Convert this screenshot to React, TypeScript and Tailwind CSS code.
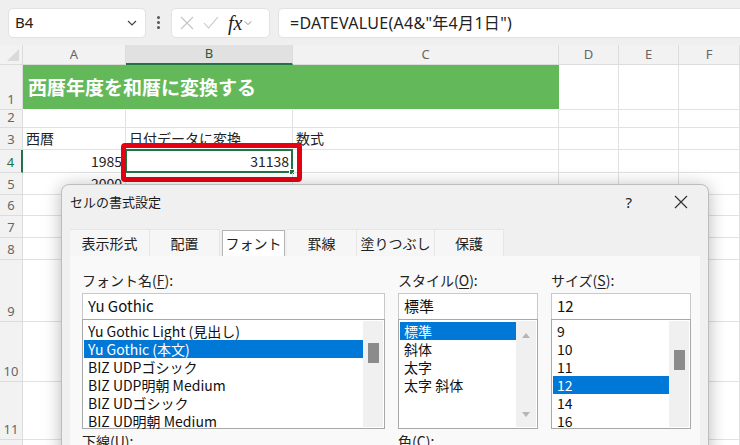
import React from 'react';

const FONT = '"Noto Sans", "Noto Sans CJK JP", sans-serif';
const JP = '"Noto Sans CJK JP", "Noto Sans", sans-serif';

const colWidths = [103, 167, 266, 60, 60, 61];
const colNames = ['A', 'B', 'C', 'D', 'E', 'F'];
const rowHeights = [45, 18, 22, 23, 22, 21, 22, 22, 62, 60, 58, 20];

function Chevron({ className }: { className?: string }) {
  return (
    <svg width="10" height="6" viewBox="0 0 10 6" className={className}>
      <path d="M1 1l4 4 4-4" fill="none" stroke="currentColor" strokeWidth="1.2" />
    </svg>
  );
}

function Toolbar() {
  return (
    <div className="flex h-[45px] items-center gap-[8px] bg-[#efefef] pl-[8px]">
      <div className="flex h-[30px] w-[138px] items-center justify-between rounded-[5px] border border-[#e2e2e2] bg-white pl-[6px] pr-[8px]">
        <span className="text-[15px] text-[#222]">B4</span>
        <Chevron className="text-[#444]" />
      </div>
      <div className="flex w-[9px] flex-col items-center gap-[2px]">
        <span className="h-[3px] w-[3px] rounded-full bg-[#555]" />
        <span className="h-[3px] w-[3px] rounded-full bg-[#555]" />
        <span className="h-[3px] w-[3px] rounded-full bg-[#555]" />
      </div>
      <div className="flex h-[30px] w-[99px] items-center gap-[9px] rounded-[5px] border border-[#e2e2e2] bg-white pl-[8px]">
        <svg width="14" height="14" viewBox="0 0 14 14">
          <path d="M1 1l12 12M13 1L1 13" stroke="#c4c4c4" strokeWidth="1.1" />
        </svg>
        <svg width="16" height="13" viewBox="0 0 16 13">
          <path d="M1 7l4.5 5L15 1" fill="none" stroke="#c4c4c4" strokeWidth="1.1" />
        </svg>
        <span className="flex items-center gap-[2px]">
          <span className="text-[20px] italic text-[#222]" style={{ fontFamily: '"Liberation Serif", serif' }}>fx</span>
          <Chevron className="w-[8px] text-[#888]" />
        </span>
      </div>
      <div className="flex h-[30px] flex-1 items-center rounded-l-[5px] border border-r-0 border-[#e2e2e2] bg-white pl-[11px] text-[16px] tracking-[0.3px] text-[#222]">
        =DATEVALUE(A4&amp;"年4月1日")
      </div>
    </div>
  );
}

function Cell({ w, h, children, className = '' }: { w: number; h: number; children?: React.ReactNode; className?: string }) {
  return (
    <div
      className={`relative flex shrink-0 border-b border-r border-[#e1e1e1] ${className}`}
      style={{ width: w, height: h }}
    >
      {children}
    </div>
  );
}

function Sheet() {
  return (
    <div className="flex flex-col bg-white" style={{ fontFamily: JP }}>
      <div className="flex h-[20px] bg-[#f2f2f2]">
        <div className="relative w-[23px] shrink-0 border-b border-r border-[#dcdcdc]">
          <svg width="12" height="12" viewBox="0 0 12 12" className="absolute bottom-[3px] right-[3px]">
            <path d="M12 0v12H0z" fill="#dadada" />
          </svg>
        </div>
        {colNames.map((c, i) => (
          <div
            key={c}
            className={`flex shrink-0 items-center justify-center border-r text-[13px] ${
              c === 'B'
                ? 'border-b-2 border-r-[#dcdcdc] border-b-[#217346] bg-[#e1e1e1] text-[#1e5e3b]'
                : 'border-b border-[#dcdcdc] text-[#666]'
            }`}
            style={{ width: colWidths[i], fontFamily: FONT }}
          >
            {c}
          </div>
        ))}
      </div>
      {rowHeights.map((h, r) => {
        const n = r + 1;
        return (
          <div key={n} className="flex">
            <div
              className={`flex w-[23px] shrink-0 items-end justify-center border-b bg-[#f2f2f2] pb-[1px] text-[13px] leading-[18px] ${
                n === 4
                  ? 'border-r-2 border-b-[#dcdcdc] border-r-[#217346] text-[#217346]'
                  : 'border-r border-[#dcdcdc] text-[#666]'
              }`}
              style={{ height: h, fontFamily: FONT }}
            >
              {n}
            </div>
            {n === 1 ? (
              <>
                <div className="flex h-[45px] w-[536px] shrink-0 items-center border-b border-white bg-[#63b95a] pl-[5px] pt-[1px]">
                  <span className="text-[19px] font-bold text-white">西暦年度を和暦に変換する</span>
                </div>
                {colWidths.slice(3).map((w, i) => (
                  <Cell key={i} w={w} h={h} />
                ))}
              </>
            ) : (
              colWidths.map((w, i) => {
                let content: React.ReactNode = null;
                let cls = 'items-end pb-[1px]';
                if (n === 3 && i === 0) content = '西暦';
                if (n === 3 && i === 1) content = '日付データに変換';
                if (n === 3 && i === 2) content = '数式';
                if (n === 4 && i === 0) { content = '1985'; cls += ' justify-end'; }
                if (n === 4 && i === 1) { content = '31138'; cls += ' justify-end'; }
                if (n === 5 && i === 0) { content = '2000'; cls += ' justify-end'; }
                return (
                  <Cell key={i} w={w} h={h} className={cls}>
                    {content && (
                      <span className="px-[3px] text-[14px] leading-[20px] text-[#222]">{content}</span>
                    )}
                    {n === 4 && i === 1 && (
                      <>
                        <span className="absolute -left-[1px] -top-[1px] bottom-[-1px] right-[-1px] border-2 border-[#217346]" />
                        <span className="absolute bottom-[-3px] right-[-3px] h-[6px] w-[6px] border border-white bg-[#217346]" />
                      </>
                    )}
                  </Cell>
                );
              })
            )}
          </div>
        );
      })}
    </div>
  );
}

function U({ children }: { children: React.ReactNode }) {
  return <span className="underline underline-offset-2">{children}</span>;
}

function ScrollBar({ thumbTop, arrows }: { thumbTop?: number; arrows?: boolean }) {
  return (
    <div className="relative w-[20px] shrink-0 bg-[#f0f0f0]">
      {thumbTop !== undefined && (
        <div className="absolute left-[5px] h-[20px] w-[11px] bg-[#8b8b8b]" style={{ top: thumbTop }} />
      )}
      {arrows && (
        <>
          <svg width="8" height="5" viewBox="0 0 8 5" className="absolute left-[6px] top-[12px]">
            <path d="M0 5L4 0l4 5z" fill="#b5b5b5" />
          </svg>
          <svg width="8" height="5" viewBox="0 0 8 5" className="absolute bottom-[10px] left-[6px]">
            <path d="M0 0l4 5 4-5z" fill="#b5b5b5" />
          </svg>
        </>
      )}
    </div>
  );
}

function ListColumn({
  width,
  label,
  value,
  items,
  selected,
  scroll,
}: {
  width: number;
  label: React.ReactNode;
  value: string;
  items: string[];
  selected: number;
  scroll: React.ReactNode;
}) {
  return (
    <div className="flex shrink-0 flex-col" style={{ width }}>
      <div className="h-[20px] text-[14px] leading-[20px] text-[#222]">{label}</div>
      <div className="mt-[3px] flex h-[26px] items-center border border-b-0 border-[#c9c9c9] bg-white pl-[5px] text-[15px] text-[#111]">
        {value}
      </div>
      <div className="flex h-[110px] border border-[#a8a8a8] bg-white p-[1px]">
        <div className="flex flex-1 flex-col pt-[1px]">
          {items.map((it, i) => (
            <div
              key={it}
              className={`h-[18px] whitespace-nowrap pl-[4px] text-[14px] leading-[18px] ${
                i === selected ? 'bg-[#0078d7] text-white' : 'text-[#111]'
              }`}
            >
              {it}
            </div>
          ))}
        </div>
        {scroll}
      </div>
    </div>
  );
}

function Dialog() {
  const tabs = ['表示形式', '配置', 'フォント', '罫線', '塗りつぶし', '保護'];
  const tabW = [80, 70, 67, 70, 78, 69];
  return (
    <div
      className="absolute left-[61px] top-[184px] h-[300px] w-[648px] rounded-[8px] border border-[#bdbdbd] bg-[#f0f0f0] shadow-[0_2px_18px_rgba(0,0,0,0.28)]"
      style={{ fontFamily: JP }}
    >
      <div className="flex h-[34px] items-center justify-between pl-[8px] pr-[20px]">
        <span className="text-[13px] text-[#1a1a1a]">セルの書式設定</span>
        <div className="flex items-center gap-[42px]">
          <span className="text-[15px] text-[#222]" style={{ fontFamily: FONT }}>?</span>
          <svg width="14" height="14" viewBox="0 0 14 14">
            <path d="M1 1l12 12M13 1L1 13" stroke="#333" strokeWidth="1.2" />
          </svg>
        </div>
      </div>
      <div className="mt-[10px] flex h-[27px] items-end pl-[8px]">
        {tabs.map((t, i) =>
          t === 'フォント' ? (
            <div
              key={t}
              className="mx-[2px] flex h-[26px] items-center justify-center border border-b-0 border-[#b4b4b4] bg-white text-[14px] text-[#222]"
              style={{ width: tabW[i] - 4 }}
            >
              {t}
            </div>
          ) : (
            <div
              key={t}
              className="flex h-[27px] items-center justify-center border-r border-t border-[#e6e6e6] bg-[#f6f6f6] text-[14px] text-[#222]"
              style={{ width: tabW[i] }}
            >
              {t}
            </div>
          )
        )}
      </div>
      <div className="mx-[8px] flex h-[220px] gap-[13px] bg-[#f9f9f9] pl-[12px] pt-[14px]">
        <div className="flex flex-col">
          <ListColumn
            width={303}
            label={<>フォント名(<U>F</U>):</>}
            value="Yu Gothic"
            items={['Yu Gothic Light (見出し)', 'Yu Gothic (本文)', 'BIZ UDPゴシック', 'BIZ UDP明朝 Medium', 'BIZ UDゴシック', 'BIZ UD明朝 Medium']}
            selected={1}
            scroll={<ScrollBar thumbTop={22} />}
          />
          <div className="mt-[2px] text-[14px] text-[#222]">下線(<U>U</U>):</div>
        </div>
        <div className="flex flex-col">
          <ListColumn
            width={140}
            label={<>スタイル(<U>O</U>):</>}
            value="標準"
            items={['標準', '斜体', '太字', '太字 斜体']}
            selected={0}
            scroll={<ScrollBar arrows />}
          />
          <div className="mt-[2px] text-[14px] text-[#222]">色(<U>C</U>):</div>
        </div>
        <ListColumn
          width={140}
          label={<>サイズ(<U>S</U>):</>}
          value="12"
          items={['9', '10', '11', '12', '14', '16']}
          selected={3}
          scroll={<ScrollBar thumbTop={29} />}
        />
      </div>
    </div>
  );
}

export default function App() {
  return (
    <div className="relative h-[445px] w-[740px] overflow-hidden bg-white" style={{ fontFamily: FONT }}>
      <Toolbar />
      <Sheet />
      <div className="absolute left-[121px] top-[143px] h-[39px] w-[181px] rounded-[4px] border-[5px] border-[#e50012]" />
      <Dialog />
    </div>
  );
}
